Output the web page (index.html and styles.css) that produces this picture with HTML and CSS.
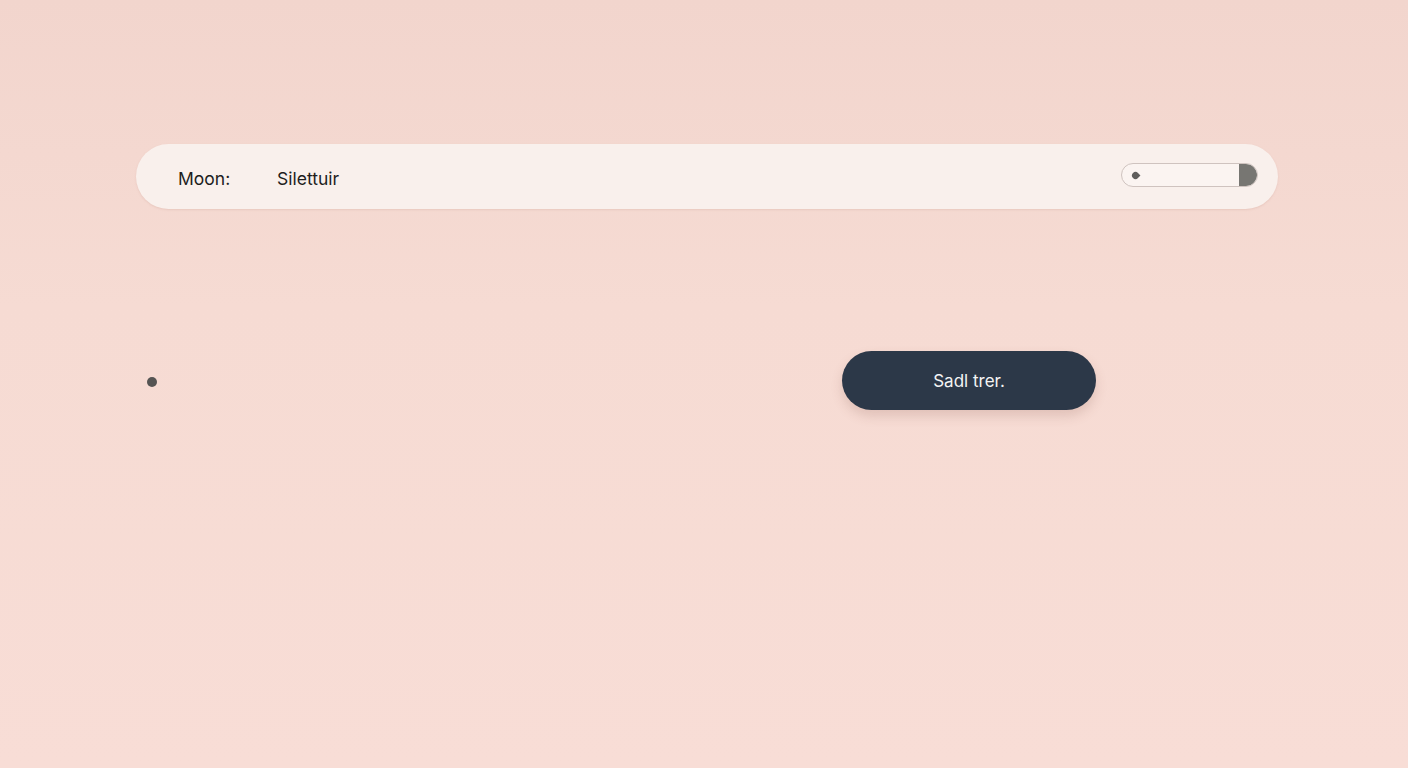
FILE: index.html
```html
<!DOCTYPE html>
<html lang="en">
<head>
  <meta charset="UTF-8">
  <title>Moon</title>
  <link rel="stylesheet" href="styles.css">
</head>
<body>
<div class="page">
  <div class="top-bar">
    <span class="bar-label">Moon:</span>
    <span class="bar-value">Silettuir</span>
    <div class="toggle">
      <span class="toggle-mark"></span>
      <span class="toggle-knob"></span>
    </div>
  </div>
  <div class="action-row">
    <span class="dot"></span>
    <button class="main-button">Sadl trer.</button>
  </div>
</div>
</body>
</html>
```

FILE: styles.css
```css
html, body {
  margin: 0;
  height: 100%;
}

body {
  background: linear-gradient(180deg, #f2d5cd 0%, #f6dbd3 40%, #f8ddd6 100%);
  font-family: Inter, "Open Sans", sans-serif;
  color: #1d1d1d;
}

.page {
  padding: 144px 130px 0 136px;
}

.top-bar {
  display: flex;
  align-items: center;
  height: 65px;
  padding: 0 20px 0 42px;
  border-radius: 33px;
  background-color: #f9f0ec;
  box-shadow: 0 1px 2px rgba(200, 150, 140, .25);
}

.bar-label {
  width: 99px;
  font-size: 17.5px;
  margin-top: 3px;
}

.bar-value {
  font-size: 17.5px;
  margin-top: 3px;
}

.toggle {
  margin-left: auto;
  margin-top: -3px;
  display: flex;
  align-items: center;
  width: 135px;
  height: 22px;
  border: 1px solid #cfc3bf;
  border-radius: 12px;
  background-color: #fbf4f1;
  overflow: hidden;
}

/* little teardrop pointing right */
.toggle-mark {
  width: 7px;
  height: 7px;
  margin-left: 10px;
  border-radius: 50% 0 50% 50%;
  transform: rotate(45deg);
  background-color: #5f5d5b;
}

.toggle-knob {
  margin-left: auto;
  width: 18px;
  height: 22px;
  border-radius: 0 11px 11px 0;
  background-color: #777672;
}

.action-row {
  display: flex;
  align-items: center;
  margin-top: 142px;
}

.dot {
  width: 10px;
  height: 10px;
  margin-left: 11px;
  margin-top: 2px;
  border-radius: 50%;
  background-color: #555453;
}

.main-button {
  margin-left: 685px;
  width: 254px;
  height: 59px;
  border: none;
  border-radius: 30px;
  background-color: #2c3848;
  color: #f4f4f4;
  font-family: Inter, "Open Sans", sans-serif;
  font-size: 17px;
  box-shadow: 0 6px 12px rgba(120, 70, 60, .18);
}
```
